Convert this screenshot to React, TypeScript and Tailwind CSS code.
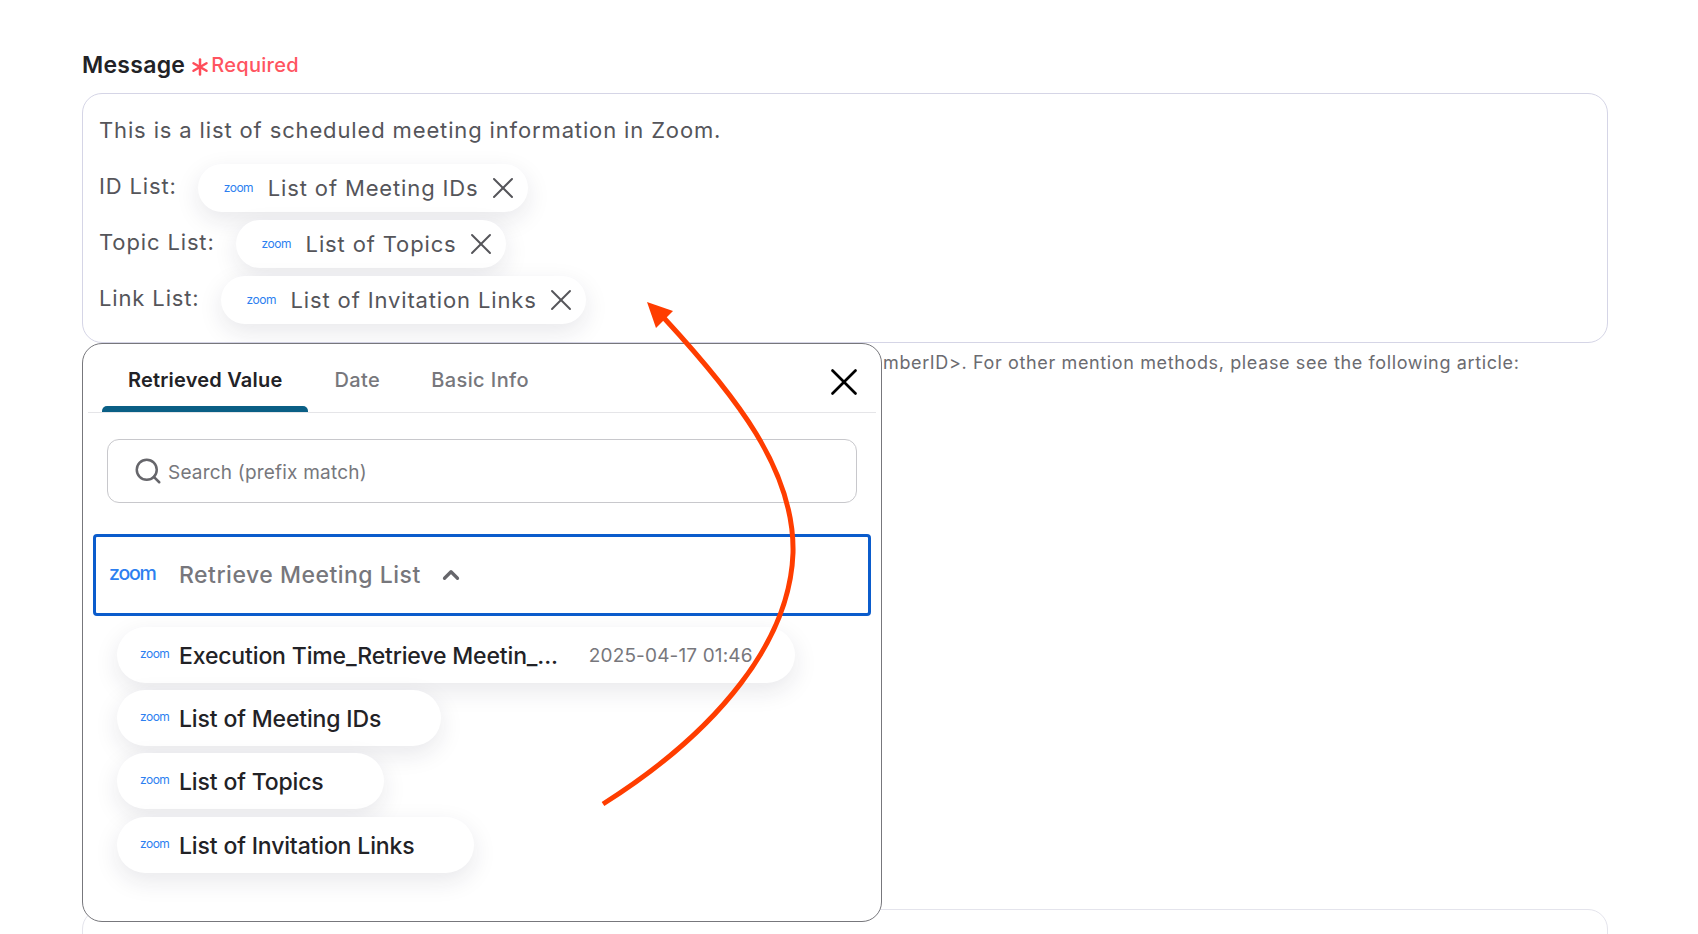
import { X, Search, ChevronUp, Asterisk } from "lucide-react";

const ZoomLogo = ({ big = false }: { big?: boolean }) => (
  <span
    className={
      big
        ? "w-[47px] text-[19.5px] leading-none font-medium tracking-[-1.2px] text-[#2d7ff0]"
        : "w-[30px] text-[12px] leading-none font-normal tracking-[-0.5px] text-[#2d7ff0]"
    }
  >
    zoom
  </span>
);

const Chip = ({ label }: { label: string }) => (
  <span className="flex h-[48px] items-center rounded-full bg-white pl-[26px] pr-[7px] shadow-[0_8px_24px_rgba(30,30,60,0.1)]">
    <ZoomLogo />
    <span className="ml-[14px] text-[22px] tracking-[0.86px] text-[#55555a]">{label}</span>
    <X className="ml-[6px] h-[36px] w-[36px] text-[#55555a]" strokeWidth={1.3} />
  </span>
);

const Row = ({ label, chip }: { label: string; chip: string }) => (
  <div className="flex h-[48px] items-center">
    <span className="-mt-[4px] mr-[21px] text-[22px] tracking-[0.86px] text-[#55555a]">{label}</span>
    <Chip label={chip} />
  </div>
);

const Item = ({ label, date }: { label: string; date?: string }) => (
  <div
    className={
      date
        ? "flex h-[56px] w-fit items-center rounded-full bg-white pl-[23px] pr-[42px] shadow-[0_8px_24px_rgba(30,30,60,0.1)]"
        : "flex h-[56px] w-fit items-center rounded-full bg-white pl-[23px] pr-[60px] last:mt-[1px] shadow-[0_8px_24px_rgba(30,30,60,0.1)]"
    }
  >
    <span className="-mt-[3px] flex"><ZoomLogo /></span>
    <span className="ml-[9px] mt-[2px] text-[23px] font-medium tracking-[-0.15px] text-[#222226]">{label}</span>
    {date && <span className="ml-[31px] mt-[2px] text-[19px] tracking-[0.15px] text-[#77777c]">{date}</span>}
  </div>
);

export default function App() {
  return (
    <div className="relative h-[934px] overflow-hidden bg-white pl-[82px] pr-[90px] pt-[50px] [font-family:Inter,sans-serif]">
      <div className="flex h-[30px] items-center">
        <span className="text-[23px] font-semibold tracking-[0.28px] text-[#222226]">Message</span>
        <Asterisk className="-mx-[6px] ml-[0px] mt-[4px] h-[30px] w-[30px] text-[#ff4d5a]" strokeWidth={2} />
        <span className="ml-[2px] text-[20px] font-medium tracking-[0.3px] text-[#ff5460]">Required</span>
      </div>

      <div className="mt-[13px] h-[250px] rounded-[20px] border border-[#d5d5e6] pl-[16px] pt-[19px]">
        <p className="text-[22px] leading-[34px] tracking-[0.86px] text-[#55555a]">
          This is a list of scheduled meeting information in Zoom.
        </p>
        <div className="mt-[17px] flex flex-col gap-[8px]">
          <Row label="ID List:" chip="List of Meeting IDs" />
          <Row label="Topic List:" chip="List of Topics" />
          <Row label="Link List:" chip="List of Invitation Links" />
        </div>
      </div>

      <p className="mt-[8px] whitespace-nowrap pl-[801px] text-[18px] leading-[24px] tracking-[0.63px] text-[#6b6b70]">
        mberID&gt;. For other mention methods, please see the following article:
      </p>

      <div className="mt-[534px] h-[200px] rounded-[20px] border border-[#e4e4ec]" />

      <div className="absolute left-[82px] top-[343px] h-[579px] w-[800px] rounded-[20px] border border-[#77777c] bg-white">
        <div className="relative mx-[5px] flex h-[69px] items-center border-b border-[#e5e5e8] pl-[14px]">
          <div className="relative flex h-full items-center px-[26px] pt-[3px]">
            <span className="text-[20px] font-semibold tracking-[0.2px] text-[#222226]">Retrieved Value</span>
            <span className="absolute bottom-0 left-0 h-[6px] w-full rounded-t-[5px] bg-[#0a5f85]" />
          </div>
          <span className="ml-[26px] pt-[3px] text-[20px] font-medium tracking-[0.4px] text-[#77777c]">Date</span>
          <span className="ml-[51px] pt-[3px] text-[20px] font-medium tracking-[0.4px] text-[#77777c]">Basic Info</span>
          <X className="absolute right-[9px] top-[15px] h-[46px] w-[46px] text-black" strokeWidth={1.4} />
        </div>

        <div className="mx-[24px] mt-[26px] flex h-[64px] items-center rounded-[12px] border border-[#c8c8cc] pl-[25px]">
          <Search className="h-[30px] w-[30px] text-[#66666b]" strokeWidth={2} />
          <span className="ml-[5px] mt-[4px] text-[19px] tracking-[0.2px] text-[#77777c]">Search (prefix match)</span>
        </div>

        <div className="mx-[10px] mt-[31px] flex h-[82px] items-center rounded-[4px] border-[3px] border-[#0b5ccc] pl-[13px]">
          <span className="-mt-[2px] flex"><ZoomLogo big /></span>
          <span className="ml-[23px] text-[23px] font-medium tracking-[0.5px] text-[#77777c]">Retrieve Meeting List</span>
          <ChevronUp className="ml-[17px] h-[26px] w-[26px] text-[#66666b]" strokeWidth={3} />
        </div>

        <div className="ml-[34px] mt-[11px] flex flex-col gap-[7px]">
          <Item label="Execution Time_Retrieve Meetin_..." date="2025-04-17 01:46" />
          <Item label="List of Meeting IDs" />
          <Item label="List of Topics" />
          <Item label="List of Invitation Links" />
        </div>
      </div>

      <svg className="pointer-events-none absolute left-0 top-0 h-[934px] w-[1698px]" viewBox="0 0 1698 934" fill="none">
        <path d="M603 804C720 730 790 640 793 553C795 470 735 395 664 318" stroke="#ff3d00" strokeWidth="5" />
        <path d="M647 302L673 311L656 328Z" fill="#ff3d00" />
      </svg>
    </div>
  );
}
